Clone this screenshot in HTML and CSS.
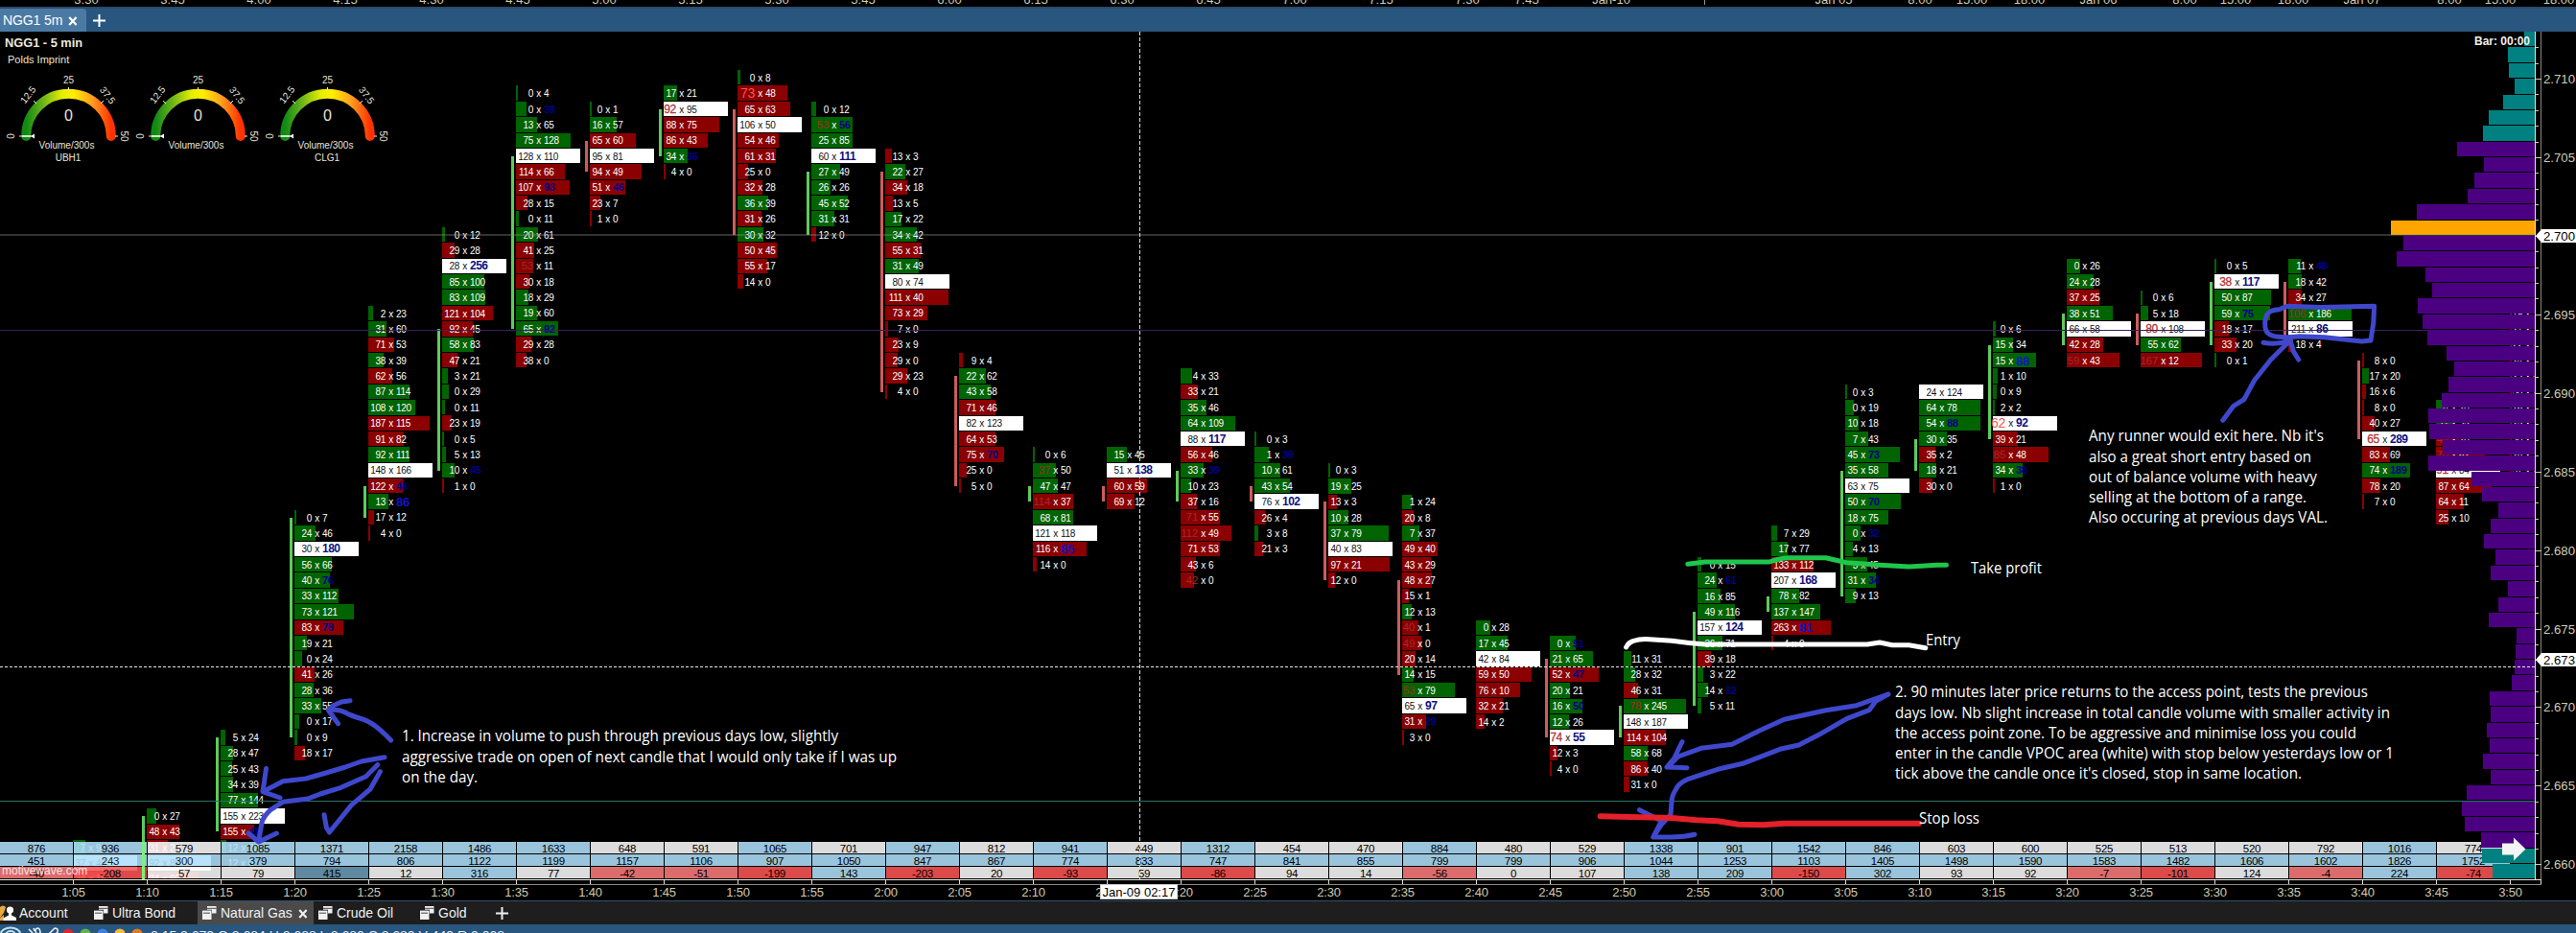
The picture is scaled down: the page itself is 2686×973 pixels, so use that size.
FILE: index.html
```html
<!DOCTYPE html>
<html lang="en">
<head>
<meta charset="utf-8">
<title>NGG1 5m</title>
<link rel="stylesheet" href="styles.css">
</head>
<body>
<div class="app">
  <svg class="top-ruler" id="topRuler" width="2686" height="7"></svg>
  <div class="tabbar">
    <div class="tab"><span>NGG1 5m</span>
      <svg width="10" height="10" viewBox="0 0 10 10"><path d="M1.2 1l7.4 8M8.600 1L1.2 9" stroke="#fff" stroke-width="2.200"/></svg>
    </div>
    <svg class="plus" width="13" height="13" viewBox="0 0 13 13"><path d="M6.500 0v13M0 6.500h13" stroke="#fff" stroke-width="2"/></svg>
  </div>

  <div class="chart">
    <div class="plot">
      <div class="layer footprints" id="footprints"></div>
      <svg class="layer" viewBox="0 33 2643 884" width="2643" height="884">
        <path d="M0 344.500H2643" stroke="#3a2060"/>
      </svg>
      <div class="layer totals" id="totals"></div>
      <div class="layer profile" id="profile"></div>
      <svg class="layer" viewBox="0 33 2643 884" width="2643" height="884">
        <path d="M0 245H2643" stroke="#8c8c8c" stroke-opacity=".36" stroke-width="2"/>
        <path d="M0 835.500H2643" stroke="#2a7268"/>
        <path d="M0 695.500H2643" stroke="#e8e8e8" stroke-dasharray="3 2"/>
        <path d="M1188.500 33V917" stroke="#e0e0d8" stroke-dasharray="4 2"/>
        <path d="M149.500 878V917" stroke="#7cf07c" stroke-width="3"/>
        <path d="M2609 879.500h12v-6l12.500 12-12.500 12v-6h-12z" fill="#f4f4f4"/>
      </svg>
      <div class="layer info">
        <div class="info-top"><b class="title">NGG1 - 5 min</b><b class="bar">Bar: 00:00</b></div>
        <div class="study">Polds Imprint</div>
        <div class="gauges" id="gauges"></div>
        <div class="watermark">motivewave.com</div>
      </div>
      <svg class="layer notes" viewBox="0 33 2643 884" width="2643" height="884">
        <g class="pen blue">
          <path d="M407.600 772Q400 764 392.500 758T375 749 360 743 343 740M365 730.700L356 732 347 736 342.600 741 352.600 754.700"/>
          <path d="M401 789.700L377 794 360 800 340 806 319 812 295 814.700 274 825.700M277.500 801.500L274 825.700 292 832"/>
          <path d="M393.800 797.500L381.600 809.700 355.600 821.300 334 828 321 833 295 836.300 282 844.700Q275 851 273 858L269.700 877M259 869L269.700 878 288.400 869"/>
          <path d="M396.400 804.700L386 823 366.400 839.700 355.600 853 343.400 868M338 849.700L340.400 863 343.400 868"/>
          <path d="M1968.800 724Q1952 730 1936 735.700L1903.800 740.700 1860.400 750.300 1834.400 762 1806 776.300 1773.700 780.300 1749.800 789 1739 799.700M1754 773.500L1745.500 791 1738 800 1759 800.700"/>
          <path d="M1968.800 724L1955.800 731.300 1949.300 740.300 1925.400 749.700 1899.400 764.700 1875.600 777 1856 781.300 1817 796.300 1791 802.300 1760.600 812.300Q1750 817 1747.600 823 1743 830 1743 836.300L1742 849.700 1732.500 859.700 1723.800 873M1709.500 844.700Q1720 850 1732.500 856L1723.800 873 1743 873Q1756 873 1767 870.300"/>
          <path d="M2317.800 438.300L2329 423.300 2339.800 416.700 2350.600 396.700 2367.800 375 2387 356M2360 357.300Q2374 360 2388 355L2391.500 366.700 2396.700 375"/>
          <path d="M2385 351.700Q2366 352 2363 345T2363.500 328.300Q2367 323 2376.500 322.700L2385 319.300 2419.600 320.500 2475.600 319.300 2474.800 336.700 2472 355 2462.700 356 2423.900 351.700 2398 350.700 2385 351.700"/>
        </g>
        <path class="pen white" d="M1695.600 675Q1698 670 1703 668.500 1710 666 1720 666.700L1743.300 668.300Q1762 671 1778 672H1947L1960 670 1973 672.700H1990.500L2007.800 675.700"/>
        <path class="pen green" d="M1759.800 588.300L1778 586H1845Q1856 582 1864.700 581.700H1903.800L1925.400 586.700 1960 589.300 1990.500 591 2020 589.300H2029.400"/>
        <path class="pen red" d="M1668.700 851.300L1743 853 1769 855.300 1791 856.300 1812.700 859.700 1838.700 860.300 1860 858.700H2001"/>
        <g class="note" id="noteText"></g>
      </svg>
    </div>
    <svg class="price-axis" id="priceAxis" viewBox="2643 33 43 889" width="43" height="889"></svg>
  </div>

  <div class="time-axis">
    <div class="ticks"></div>
    <div class="times" id="times"></div>
    <div class="time-tag">Jan-09 02:17</div>
  </div>

  <div class="pages">
    <div class="page account">
      <svg width="17" height="16" viewBox="0 0 17 16"><path d="M0 2q3-3 6 0l-2 6-4 5z" fill="#e9a93f"/><path d="M0 13l4-3v6H0z" fill="#e9a93f"/><circle cx="10.500" cy="5" r="3.600" fill="#fff"/><path d="M9 8h3v2.500l5 2.500v3H3.500v-2.500L9 10.500z" fill="#fff"/></svg>
      <span>Account</span>
    </div>
    <div class="page ultra"><svg class="win"><use href="#win"/></svg><span>Ultra Bond</span></div>
    <div class="page active"><svg class="win"><use href="#win"/></svg><span>Natural Gas</span>
      <svg class="close" width="10" height="10" viewBox="0 0 10 10"><path d="M1.2 1l7.400 8M8.600 1L1.2 9" stroke="#eee" stroke-width="2.200"/></svg></div>
    <div class="page crude"><svg class="win"><use href="#win"/></svg><span>Crude Oil</span></div>
    <div class="page gold"><svg class="win"><use href="#win"/></svg><span>Gold</span></div>
    <svg class="plus" width="13" height="13" viewBox="0 0 13 13"><path d="M6.500 0v13M0 6.500h13" stroke="#eee" stroke-width="2"/></svg>
  </div>

  <svg class="status" width="2686" height="9" viewBox="0 964 2686 9">
    <ellipse cx="11" cy="974" rx="10" ry="6.500" fill="none" stroke="#bfe0ee" stroke-width="2"/>
    <ellipse cx="11" cy="975" rx="5" ry="4" fill="none" stroke="#bfe0ee" stroke-width="2"/>
    <path d="M30 969l4 4M35 968l1 3M39 975q-4-6 0-7 3 0 3 5M51 974l6-6q4 0 3 4l-2 2" fill="none" stroke="#e8eef2" stroke-width="1.600"/>
    <circle cx="71" cy="974" r="5.500" fill="#d8282c"/><circle cx="89" cy="974" r="5.500" fill="#68b04a"/>
    <circle cx="107" cy="974" r="5.500" fill="#3f7fe0"/><circle cx="125" cy="974" r="5.500" fill="#f2bc3a"/>
    <circle cx="143" cy="974" r="5.500" fill="#e57a1e"/>
    <text x="157" y="979.500" textLength="369" lengthAdjust="spacingAndGlyphs">2:15 2.679 O 2.684 H 2.688 L 2.680 C 2.680 V 449 R 0.008</text>
  </svg>
</div>
<svg class="defs" width="0" height="0"><symbol id="win" viewBox="0 0 15 14"><path d="M5 0h9.500v7.500H10V3.800H5z" fill="#f0f0f0"/><path d="M0 4.600h9.500V14H0z" fill="#f0f0f0"/><path d="M5 2.300h9.500M1 7.200h7" stroke="#333" stroke-width=".9"/></symbol></svg>
<script src="script.js"></script>
</body>
</html>
```
FILE: styles.css
```css
* { box-sizing: border-box; }
body { margin: 0; background: #000; overflow: hidden; font-family: "Liberation Sans", Arial, sans-serif; color: #fff; }
svg { display: block; }
.app { width: 2686px; height: 973px; display: flex; flex-direction: column; overflow: hidden; }
.defs { position: absolute; }
.top-ruler { flex: none; }
.top-ruler text { font-size: 13px; fill: #cfccb2; text-anchor: middle; }

.tabbar { flex: none; height: 26px; border-top: 2px solid #2b4a68; background: #28567f; display: flex; align-items: center; }
.tab { width: 90px; height: 24px; padding-left: 3px; display: flex; align-items: center; gap: 6px; background: #4a7aa4; border-radius: 0 4px 0 0; font-size: 14px; letter-spacing: -.1px; }
.tab svg { margin-top: 2px; }
.tabbar .plus { margin-left: 7px; }

.chart { flex: none; display: flex; height: 884px; }
.plot { width: 2643px; height: 884px; display: grid; overflow: hidden; }
.layer { grid-area: 1 / 1; z-index: 0; isolation: isolate; }
.price-axis { flex: none; overflow: visible; }
.price-axis text { font-size: 13.500px; fill: #cfccb2; }
.price-axis .tag-text { fill: #000; }

.footprints { display: flex; align-items: flex-start; padding-left: 76px; height: 884px; overflow: hidden; }
.col { flex: none; width: 77px; position: relative; }
.cell { height: 15.386px; margin-bottom: 1px; display: flex; align-items: center; white-space: nowrap; font-size: 10px; letter-spacing: -.3px; line-height: 15px; padding-top: 1px; }
.cell.up { background: #006400; }
.cell.down { background: #8b0000; }
.cell.poc { background: #fff; color: #111; }
.bid { flex: none; display: flex; justify-content: flex-end; }
.by { flex: none; width: 11px; text-align: center; }
.col.wide .bid { width: 18px; }
.col.narrow .bid { width: 13px; }
.hi-b { color: #00008b; font-weight: bold; font-size: 11px; }
.poc .hi-b { color: #10107e; font-size: 12px; letter-spacing: -.5px; }
.hi-B { color: #1414c8; font-weight: bold; font-size: 13px; }
.hi-r { color: #a52a2a; font-size: 11.500px; }
.poc .hi-r { color: #b23434; font-size: 12px; -webkit-text-stroke: .3px #b23434; }
.hi-R, .poc .hi-R { color: #ff5050; font-size: 14px; }
.candle { position: absolute; left: -5px; width: 3px; }
.candle.g { background: #5ccc5c; }
.candle.r { background: #cc5c5c; }

.totals { align-self: end; display: grid; grid-template-columns: repeat(34, 77px); grid-auto-rows: 12px; row-gap: 1px; height: 39px; margin-left: -1px; opacity: .88; background: #000; }
.totals div { margin-left: 1px; display: flex; align-items: center; justify-content: center; font-size: 11.500px; letter-spacing: -.3px; color: #000; padding-top: 1px; line-height: 12px; }
.t-blue { background: #b0e0fb; }
.t-gray { background: #fbfbfb; }
.t-slate { background: #6b9db8; }
.t-red { background: #fb5555; }
.t-rose { background: #fb7c7c; }

.profile { display: flex; flex-direction: column; align-items: flex-end; height: 884px; overflow: hidden; }
.profile div { flex: none; height: 15.386px; margin-bottom: 1px; }
.p-teal { background: #008080; }
.p-purple { background: #4b0082; }
.p-orange { background: #ffa500; }

.info { display: flex; flex-direction: column; height: 884px; }
.info-top { display: flex; justify-content: space-between; padding: 4px 5px 0 5px; height: 22px; line-height: 16px; }
.title { font-size: 12.800px; color: #ece8dc; }
.bar { font-size: 12px; line-height: 12px; color: #eee; }
.study { padding-left: 8px; height: 16px; line-height: 14px; font-size: 11px; color: #e8e4d8; }
.gauges { display: flex; padding-left: 4px; margin-top: 5px; }
.gauges text { font-size: 10px; fill: #e8e4d8; text-anchor: middle; }
.gauges .value { font-size: 16px; }
.watermark { margin-top: auto; padding-left: 2px; height: 18px; font-size: 12px; line-height: 18px; color: #f6e4e4; }

.pen { fill: none; stroke-width: 5; stroke-linecap: round; stroke-linejoin: round; }
.blue { stroke: #3f48cc; }
.white { stroke: #fff; }
.green { stroke: #1fc64c; }
.red { stroke: #e4202a; stroke-width: 6; }
.note text { font-family: "Open Sans", "Noto Sans", sans-serif; font-size: 15.800px; fill: #fff; }

.time-axis { flex: none; height: 23px; position: relative; border-bottom: 1px solid #34506f; }
.ticks { width: 2650px; height: 6px; border-top: 1px solid #e4e4dc; border-bottom: 1px solid #8c887c; background: repeating-linear-gradient(90deg, #ddd 0 1px, transparent 1px 77px) -1px 0; }
.times { display: flex; padding-left: 38px; }
.times span { flex: none; width: 77px; text-align: center; font-size: 13px; letter-spacing: -.2px; line-height: 15px; color: #cfccb2; }
.time-tag { position: absolute; left: 1147px; top: 5px; width: 81px; height: 16px; border: 1px solid #ccc; background: #fff; color: #000; font-size: 13px; line-height: 15px; text-align: center; white-space: nowrap; }

.pages { flex: none; height: 24px; background: #1e1e1e; display: flex; align-items: center; font-size: 14px; color: #f0f0f0; }
.page { height: 24px; display: flex; align-items: center; gap: 4px; white-space: nowrap; }
.win { width: 15px; height: 14px; }
.account { width: 98px; gap: 3px; }
.ultra { width: 108px; }
.active { width: 121px; padding-left: 5px; background: #4a4a4a; }
.active .close { margin-left: 2px; margin-top: 2px; }
.crude { width: 110px; padding-left: 5px; }
.gold { width: 80px; padding-left: 1px; }
.status { flex: none; background: #28567f; }
.status text { font-size: 13px; fill: #e8eef2; }
```
FILE: script.js
```js
const TICK = 16.386;
const byId = (id) => document.getElementById(id);

// Each column: minutes slot, first price row, candle (colour, from row, to row), cells.
// Number suffixes: b/B blue highlight, r/R red highlight.
const columns = [
  [-3, 49, '', '7x9 37x45 24x18'],
  [-2, 47, 'g 47 52', '0x27 48x43 31x29 92x88 84x60'],
  [-1, 42, 'g 42 48', '5x24 28x47 25x43 34x39 77x144 155x223 155x41b 12x22 12x0'],
  [0, 28, 'g 28 42', '0x7 24x46 30x180b 56x66 40x76b 33x112 73x121 83x78b 19x21 0x24 41x26 28x36 33x55 0x17 0x9 18x17'],
  [1, 15, 'g 26 28', '2x23 31x60 71x53 38x39 62x56 87x114 108x120 187x115 91x82 92x111 148x166 122x48b 13x86B 17x12 4x0'],
  [2, 10, 'g 16 25', '0x12 29x28 28x256b 85x100 83x109 121x104 92x45 58x83 47x21 3x21 0x29 0x11 23x19 0x5 5x13 10x45b 1x0'],
  [3, 1, 'g 5 16', '0x4 0x39b 13x65 75x128 128x110 114x66 107x93b 28x15 0x11 20x61 41x25 53rx11 30x18 18x29 19x60 65x92b 29x28 38x0'],
  [4, 2, 'r 4 6', '0x1 16x57 65x60 95x81 94x49 51x46b 23x7 1x0'],
  [5, 1, 'g 2 5', '17x21 92rx95 88x75 86x43 34x36b 4x0'],
  [6, 0, 'r 2 10', '0x8 73Rx48 65x63 106x50 54x46 61x31 25x0 32x28 36x39 31x26 30x32 50x45 55x17 14x0'],
  [7, 2, 'g 6 10', '0x12 53rx56b 25x85 60x111b 27x49 26x26 45x52 31x31 12x0'],
  [8, 5, 'r 6 20', '13x3 22x27 34x18 13x5 17x22 34x42 55x31 31x49 80x74 111x40 73x29 7x0 23x9 29x0 29x23 4x0'],
  [9, 18, 'r 19 26', '9x4 22x62 43x58 71x46 82x123 64x53 75x70b 25x0 5x0'],
  [10, 24, 'g 26 27', '0x6 37rx50 47x47 114rx37 68x81 121x118 116x85B 14x0'],
  [11, 24, 'r 26 27', '15x45 51x138b 60x59 69x12'],
  [12, 19, 'g 25 27', '4x33 33x21 35x46 64x109 88x117b 56x46 33x39b 10x23 37x16 71rx55 112rx49 71x53 43x6 42rx0'],
  [13, 23, 'r 26 27', '0x3 1x39b 10x61 43x54 76x102b 26x4 3x8 21x3'],
  [14, 25, 'r 27 32', '0x3 19x25 13x3 10x28 37x79 40x83 97x21 12x0'],
  [15, 27, 'r 32 38', '1x24 20x8 7x37 49x40 43x29 48x27 15x1 12x13 40rx1 49rx0 20x14 14x15 53rx79 65x97b 31x29b 3x0'],
  [16, 35, '', '0x28 17x45 42x84 59x50 76x10 32x21 14x2'],
  [17, 36, 'r 37 42', '0x51b 21x65 52x47b 20x21 16x50b 12x26 74rx55b 12x3 4x0'],
  [18, 37, 'g 40 42', '11x31 28x32 46x31 78rx245 148x187 114x104 58x68 86x40 31x0'],
  [19, 31, 'g 34 40', '0x15 24x61b 16x85 49x116 157x124b 36x71 39x18 3x22 14x32b 5x11'],
  [20, 29, 'g 33 34', '7x29 17x77 133x112 207x168b 78x82 137x147 263x81B 4x0'],
  [21, 20, 'g 25 33', '0x3 0x19 10x18 7x43 45x73b 35x58 63x75 50x70b 18x75 0x32b 4x13 3x45 31x34b 9x13'],
  [22, 20, 'g 23 25', '24x124 64x78 54x88b 30x35 35x2 18x21 30x0'],
  [23, 16, 'g 17 23', '0x6 15x34 15x88B 1x10 0x9 2x2 62Rx92b 39x21 85rx48 34x38b 1x0'],
  [24, 12, 'g 15 17', '0x26 24x28 37x25 38x51 66x58 42x28 59rx43'],
  [25, 14, 'r 15 17', '0x6 5x18 80rx108 55x62 167rx12'],
  [26, 12, 'g 13 17', '0x5 38rx117b 50x87 59x75b 18x17 33x20 0x1'],
  [27, 12, 'r 13 17', '11x48b 18x42 34x27 106rx186 211x86b 18x4'],
  [28, 18, 'r 18 23', '8x0 17x20 16x6 8x0 40x27 65rx289b 83x69 74x189b 78x20 7x0'],
  [29, 21, '', '4x20 11x35 44rx20 70rx62 91rx84 87x64 64x11 25x10'],
  [30, 15, '', '19x24 21x17 22x30 24x15 23x41 38x27 16x32 25x31 30x12 28x19 37x24'],
];

function num(text, cls) {
  const m = text.match(/^(\d+)([bBrR]?)$/);
  return `<span class="${cls}${m[2] ? ' hi-' + m[2] : ''}"><span>${m[1]}</span></span>`;
}

byId('footprints').innerHTML = columns.map(([slot, first, candle, list]) => {
  const cells = list.split(' ').map((s) => s.split('x'));
  const sums = cells.map(([a, b]) => parseInt(a) + parseInt(b));
  const max = slot === 30 ? 2000 : Math.max(...sums);
  const wide = cells.some((c) => c.some((v) => parseInt(v) >= 100));
  const rows = cells.map(([a, b], i) => {
    const kind = sums[i] === max ? 'poc' : parseInt(b) >= parseInt(a) ? 'up' : 'down';
    const w = Math.max(1.6, sums[i] / max * 67).toFixed(1);
    return `<div class="cell ${kind}" style="width:${w}px">${num(a, 'bid')}<span class="by">x</span>${num(b, 'ask')}</div>`;
  }).join('');
  let bar = '';
  if (candle) {
    const [c, from, to] = candle.split(' ');
    bar = `<i class="candle ${c}" style="top:${(48 + TICK * from).toFixed(1)}px;height:${(TICK * (to - from)).toFixed(1)}px"></i>`;
  }
  return `<div class="col ${wide ? 'wide' : 'narrow'}" style="padding-top:${(40.1 + TICK * first).toFixed(2)}px">${rows}${bar}</div>`;
}).join('');

const totals = [
  [876,936,579,1085,1371,2158,1486,1633,648,591,1065,701,947,812,941,449,1312,454,470,884,480,529,1338,901,1542,846,603,600,525,513,520,792,1016,774],
  [451,243,300,379,794,806,1122,1199,1157,1106,907,1050,847,867,774,833,747,841,855,799,799,906,1044,1253,1103,1405,1498,1590,1583,1482,1606,1602,1826,1752],
  [-40,-208,57,79,415,12,316,77,-42,-51,-199,143,-203,20,-93,59,-86,94,14,-56,0,107,138,209,-150,302,93,92,-7,-101,124,-4,224,-74],
];
const tone = [
  (v) => v > 840 ? 'blue' : 'gray',
  () => 'blue',
  (v) => v > 400 ? 'slate' : v > 130 ? 'blue' : v >= 0 ? 'gray' : v < -70 ? 'red' : 'rose',
];
byId('totals').innerHTML = totals.map((row, r) => row.map((v) => `<div class="t-${tone[r](v)}">${v}</div>`).join('')).join('');

const profile = [11,28,27,21,33,48,54,81,53,63,70,123,150,137,144,114,107,122,117,112,92,84,90,97,111,110,96,111,66,55,38,46,53,41,46,28,38,48,19,20,21,24,47,46,50,47,54,46,71,76,73,56,55,44];
byId('profile').innerHTML = profile.map((w, i) => {
  const c = i < 7 || i > 51 ? 'teal' : i === 12 ? 'orange' : 'purple';
  return `<div class="p-${c}" style="width:${w}px"></div>`;
}).join('');

let axis = '<path d="M2643.500 33V917" stroke="#e8e4d8"/><path d="M2649.500 33V922" stroke="#8c887c"/>';
for (let n = -2; n <= 50; n++) {
  const y = Math.round(82 + TICK * n) + .5;
  axis += `<path d="M2644 ${y}h${n % 5 ? 3 : 6}" stroke="#cfccb2"/>`;
  if (n % 5 === 0 && n !== 10) axis += `<text x="2652" y="${y + 4.5}" textLength="33" lengthAdjust="spacingAndGlyphs">${(2.71 - n / 1000).toFixed(3)}</text>`;
}
[['2.700', 246], ['2.673', 688]].forEach(([t, y]) => {
  axis += `<path d="M2644 ${y}l6-7h37v14h-37z" fill="#fff"/><text class="tag-text" x="2652" y="${y + 5}" textLength="33" lengthAdjust="spacingAndGlyphs">${t}</text>`;
});
byId('priceAxis').innerHTML = axis;

let times = '';
for (let m = 65; m <= 230; m += 5) times += `<span>${Math.floor(m / 60)}:${String(m % 60).padStart(2, '0')}</span>`;
byId('times').innerHTML = times;

const ruler = [];
for (let i = 0; i < 15; i++) {
  const m = 210 + i * 15;
  ruler.push([90 + i * 90, `${Math.floor(m / 60)}:${String(m % 60).padStart(2, '0')}`]);
}
ruler.push([1440, '7:15'], [1530, '7:30'], [1592, '7:45'], [1680, 'Jan-10'], [1912, 'Jan 05'], [2002, '8:00'], [2056, '15:00'], [2116, '18:00'], [2188, 'Jan 06'],
  [2278, '8:00'], [2331, '15:00'], [2391, '18:00'], [2463, 'Jan 07'], [2554, '8:00'], [2607, '15:00'], [2668, '18:00']);
byId('topRuler').innerHTML = ruler.map(([x, t]) => `<text x="${x}" y="3.500">${t}</text>`).join('') + '<path d="M1777.500 0v5" stroke="#999"/>';

byId('gauges').innerHTML = ['UBH1', '', 'CLG1'].map((name, i) => `
  <svg width="135" height="96" viewBox="0 76 135 96">
    <defs><linearGradient id="heat${i}"><stop offset="0" stop-color="#118a14"/><stop offset=".2" stop-color="#6db41a"/><stop offset=".42" stop-color="#e4ee00"/><stop offset=".56" stop-color="#ffee00"/><stop offset=".78" stop-color="#ff9c20"/><stop offset="1" stop-color="#ff3200"/></linearGradient></defs>
    <path d="M23.200 142A44.300 44.300 0 0 1 111.800 142" fill="none" stroke="url(#heat${i})" stroke-width="10" stroke-linecap="round"/>
    <path d="M67.500 91v3M31 105l3 3M104 105l-3 3M116 142h3M16 142h14" stroke="#eee"/>
    <path d="M19 141h9v2h-9z" fill="#c8f0c8"/><path d="M28 142l4-2.500v5z" fill="#fff"/>
    <text x="67.500" y="86.500">25</text>
    <text transform="translate(28 101) rotate(-52)">12.5</text>
    <text transform="translate(105.500 101.500) rotate(52)">37.5</text>
    <text transform="translate(11 142) rotate(-90)">0</text>
    <text transform="translate(122 142) rotate(90)">50</text>
    <text class="value" x="67.500" y="126">0</text>
    <text x="65.500" y="155">Volume/300s</text>
    <text x="67" y="168">${name}</text>
  </svg>`).join('');

const notes = [
  [419, 772.5, 455, '1. Increase in volume to push through previous days low, slightly'],
  [419, 794.5, 516, 'aggressive trade on open of next candle that I would only take if I was up'],
  [419, 815.5, 79, 'on the day.'],
  [1976, 726.5, 493, '2. 90 minutes later price returns to the access point, tests the previous'],
  [1976, 748.5, 516, 'days low. Nb slight increase in total candle volume with smaller activity in'],
  [1976, 769.5, 481, 'the access point zone. To be aggressive and minimise loss you could'],
  [1976, 790.5, 520, 'enter in the candle VPOC area (white) with stop below yesterdays low or 1'],
  [1976, 811.5, 424, "tick above the candle once it's closed, stop in same location."],
  [2178, 459.5, 245, "Any runner would exit here. Nb it's"],
  [2178, 481.5, 232, 'also a great short entry based on'],
  [2178, 502.5, 238, 'out of balance volume with heavy'],
  [2178, 523.5, 227, 'selling at the bottom of a range.'],
  [2178, 544.5, 249, 'Also occuring at previous days VAL.'],
  [2055, 597.5, 74, 'Take profit'],
  [2008, 672.5, 36, 'Entry'],
  [2001, 858.5, 63, 'Stop loss'],
];
byId('noteText').innerHTML = notes.map(([x, y, w, t]) => `<text x="${x}" y="${y}" textLength="${w}" lengthAdjust="spacingAndGlyphs">${t}</text>`).join('');
```
